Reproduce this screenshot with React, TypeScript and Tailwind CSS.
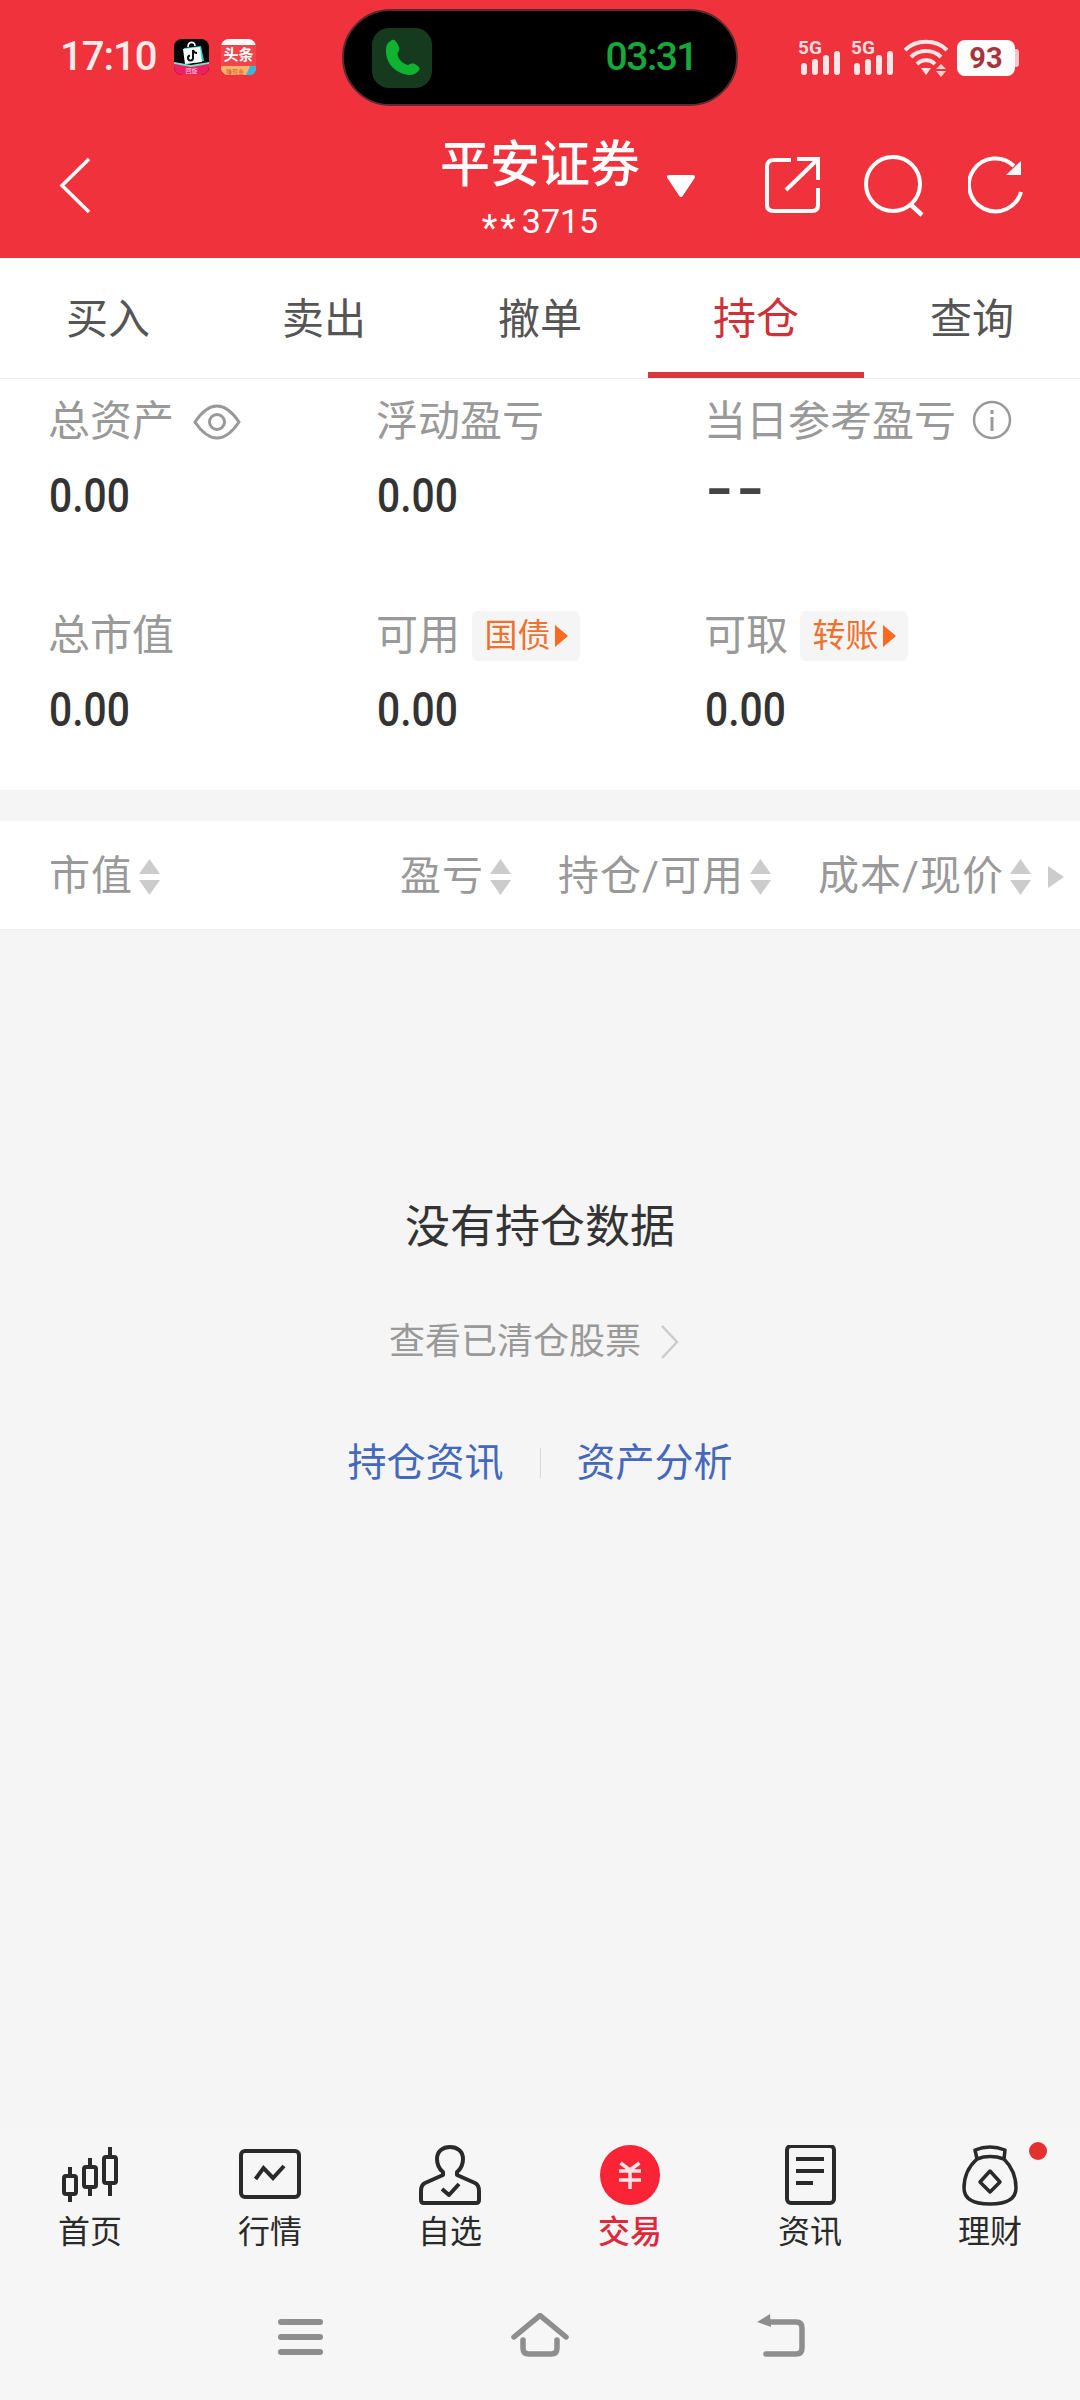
const summary = [
  { label: '总资产', value: '0.00', extra: 'eye' },
  { label: '浮动盈亏', value: '0.00' },
  { label: '当日参考盈亏', value: '--', extra: 'info' },
  { label: '总市值', value: '0.00' },
  { label: '可用', value: '0.00', badge: '国债' },
  { label: '可取', value: '0.00', badge: '转账' },
];

const StatusSignal = () => (
  <svg width="44" height="42" viewBox="0 -4 44 42" className="-mt-[4px] block">
    <text x="0" y="15" fontSize="19" fontWeight="700" fontFamily="Roboto, sans-serif" fill="#ffdcdc">5G</text>
    <g fill="#ffe6e6">
      <rect x="3" y="24" width="6" height="12" rx="3" />
      <rect x="14" y="20" width="6" height="16" rx="3" />
      <rect x="25" y="16" width="6" height="20" rx="3" />
      <rect x="36" y="12" width="6" height="24" rx="3" />
    </g>
  </svg>
);

const DouyinIcon = () => (
  <svg width="35" height="36" viewBox="0 0 35 36" className="block">
    <rect width="35" height="36" rx="8" fill="#050505" />
    <path d="M0 25 L17 27 L35 25 V28 A8 8 0 0 1 27 36 H8 A8 8 0 0 1 0 28 Z" fill="#ef1f63" />
    <path d="M0 23 L17 26 L35 23 V25 L17 28 L0 25 Z" fill="#7ee0c8" />
    <path d="M10 9 L27 7 L30 22 L13 25 Z" fill="#1fd5d8" />
    <path d="M9 10 L26 8 L28 23 L11 25 Z" fill="#ffffff" />
    <path d="M14 8 C14 2 21 2 21 7" fill="none" stroke="#ffffff" strokeWidth="1.6" />
    <path d="M19 11 V19 A2.5 2.5 0 1 1 16 16.5 M19 11 C19.500 13 21 14 23 14" fill="none" stroke="#111111" strokeWidth="2" />
    <text x="17.500" y="34" textAnchor="middle" fontSize="6" fill="#ffd6e2" fontFamily="Noto Sans CJK SC, sans-serif">回旋</text>
  </svg>
);

const ToutiaoIcon = () => (
  <svg width="35" height="36" viewBox="0 0 35 36" className="block">
    <rect width="35" height="36" rx="8" fill="#ffffff" />
    <path d="M0 6 H35 V28 H0 Z" fill="#f0454b" />
    <text x="17.500" y="21" textAnchor="middle" fontSize="15" fontWeight="700" fill="#ffffff" fontFamily="Noto Sans CJK SC, sans-serif">头条</text>
    <path d="M0 27 H35 V28 A8 8 0 0 1 27 36 H8 A8 8 0 0 1 0 28 Z" fill="#fbb56b" />
    <path d="M29 27 H35 V30 A6 6 0 0 1 29 36 H25 Z" fill="#38b6dc" />
    <text x="14" y="34.500" textAnchor="middle" fontSize="6" fill="#d9573a" fontFamily="Noto Sans CJK SC, sans-serif">赚现金</text>
  </svg>
);

const StatusBar = () => (
  <div className="flex h-[106px] items-start pl-[60px] pt-[9px]">
    <div className="mt-[30px] flex h-[36px] items-center">
      <span className="w-[97px] text-[40px] font-medium leading-[36px] tracking-[-1px] text-[#ffe9e9]">17:10</span>
      <div className="ml-[17px]"><DouyinIcon /></div>
      <div className="ml-[12px]"><ToutiaoIcon /></div>
    </div>
    <div className="ml-[86px] flex h-[97px] w-[396px] items-center justify-between rounded-full border-[2px] border-[#5c2a2c] bg-black pl-[28px] pr-[39px]">
      <div className="flex h-[60px] w-[60px] items-center justify-center rounded-[17px] bg-[#163a1e]">
        <svg width="40" height="42" viewBox="0 0 40 42">
          <path d="M10 3 C13 2 15 6 17 10 C18 13 16 15 15.500 17 C16 22 21 27 26 28 C28 27 30 26 33 27 C36 29 39 31 37 33 C34 38 28 39 22 37 C11 34 3 24 4 12 C4 8 6 5 10 3 Z" fill="#0fb32f" />
        </svg>
      </div>
      <span className="text-[39px] font-medium leading-none tracking-[-1.5px] text-[#16a83a]">03:31</span>
    </div>
    <div className="ml-[60px] mt-[31px] flex h-[36px] items-center">
      <StatusSignal />
      <div className="ml-[9px]"><StatusSignal /></div>
      <svg width="44" height="38" viewBox="0 0 44 38" className="ml-[9px] block">
        <g fill="none" stroke="#ffe6e6" strokeWidth="4">
          <path d="M1 11 C12 0 32 0 43 11" />
          <path d="M7 18 C15 10 29 10 37 18" />
          <path d="M13 25 C18 20 26 20 31 25" />
        </g>
        <path d="M17 29 H27 L22 36 Z" fill="#ffe6e6" />
        <path d="M37 25 L42 30 H32 Z M32 32 H42 L37 38 Z" fill="#ffd2d2" />
      </svg>
      <div className="ml-[9px] flex items-center">
        <div className="flex h-[36px] w-[58px] items-center justify-center rounded-[8px] bg-white text-[29px] font-bold leading-none text-[#a9333c]">93</div>
        <div className="h-[18px] w-[4px] rounded-r-[3px] bg-[#ffc4c8]" />
      </div>
    </div>
  </div>
);

const Header = () => (
  <div className="bg-[#f0323c] text-white">
    <StatusBar />
    <div className="grid h-[152px] grid-cols-[1fr_auto_1fr]">
      <div className="pl-[58px] pt-[51px]">
        <svg width="34" height="57" viewBox="0 0 34 57" className="block">
          <path d="M31 2 L4 28.500 L31 55" fill="none" stroke="#ffffff" strokeWidth="3.500" />
        </svg>
      </div>
      <div className="relative flex flex-col items-center pt-[29px]">
        <div className="text-[50px] font-medium leading-[60px]">平安证券</div>
        <div className="mt-[6px] flex h-[40px] items-center text-[34px] leading-[40px]">
          <span className="relative top-[7px] mr-[3px] text-[36px] tracking-[3px]">**</span>3715
        </div>
        <svg width="30" height="24" viewBox="0 0 30 24" className="absolute left-[100%] top-[68px] ml-[26px]">
          <path d="M3 3 H27 L15 21 Z" fill="#ffffff" stroke="#ffffff" strokeWidth="4" strokeLinejoin="round" />
        </svg>
      </div>
      <div className="flex items-start justify-end gap-[42px] pr-[54px] pt-[49px]">
        <svg width="58" height="60" viewBox="0 0 58 60" className="block">
          <path d="M27 5 H10 Q3 5 3 12 V50 Q3 56 10 56 H48 Q54 56 54 50 V33" fill="none" stroke="#ffffff" strokeWidth="4" />
          <path d="M22 35 L53 5 M33 4 H54 V25" fill="none" stroke="#ffffff" strokeWidth="4" />
        </svg>
        <svg width="62" height="62" viewBox="0 0 62 62" className="block">
          <circle cx="29" cy="29" r="27" fill="none" stroke="#ffffff" strokeWidth="4" />
          <path d="M46 49 L58 60" fill="none" stroke="#ffffff" strokeWidth="4.500" />
        </svg>
        <svg width="58" height="60" viewBox="0 0 58 60" className="block">
          <path d="M53 37 A26.500 26.500 0 1 1 46 11" fill="none" stroke="#ffffff" strokeWidth="4" />
          <path d="M53 6 V20 H38 Z" fill="#ffffff" />
        </svg>
      </div>
    </div>
  </div>
);

const Tabs = () => (
  <div className="flex h-[121px] border-b border-[#eeeeee] bg-white">
    {['买入', '卖出', '撤单', '持仓', '查询'].map((tab) => {
      const active = tab === '持仓';
      return (
        <div
          key={tab}
          className={
            active
              ? 'flex flex-1 items-center justify-center border-b-[6px] border-[#d9363e] pt-[9px] text-[43px] text-[#cf3139]'
              : 'flex flex-1 items-center justify-center pt-[3px] text-[42px] text-[#555555]'
          }
        >
          {tab}
        </div>
      );
    })}
  </div>
);

const EyeIcon = () => (
  <svg width="48" height="36" viewBox="0 0 48 36" className="ml-[19px] block">
    <path d="M2 18 C10 6 17 2 24 2 C31 2 38 6 46 18 C38 30 31 34 24 34 C17 34 10 30 2 18 Z" fill="none" stroke="#999999" strokeWidth="3" />
    <circle cx="24" cy="18" r="7.500" fill="none" stroke="#999999" strokeWidth="3" />
  </svg>
);

const InfoIcon = () => (
  <svg width="40" height="40" viewBox="0 0 40 40" className="ml-[16px] mt-[-5px] block">
    <circle cx="20" cy="20" r="18" fill="none" stroke="#999999" strokeWidth="2.500" />
    <rect x="18.500" y="10" width="3" height="4" fill="#999999" />
    <rect x="18.500" y="17" width="3" height="14" fill="#999999" />
  </svg>
);

const Summary = () => (
  <div className="grid grid-cols-[328px_328px_1fr] gap-y-[81px] bg-white pb-[51px] pl-[48px] pt-[13px]">
    {summary.map((item) => (
      <div key={item.label}>
        <div className="flex h-[60px] items-center text-[42px] leading-[60px] text-[#999999]">
          <span>{item.label}</span>
          {item.extra === 'eye' && <EyeIcon />}
          {item.extra === 'info' && <InfoIcon />}
          {item.badge && (
            <span className="ml-[12px] flex h-[50px] w-[108px] items-center justify-center gap-[4px] rounded-[6px] bg-[#f5f5f5] text-[33px] text-[#f0702e]">
              {item.badge}
              <svg width="13" height="22" viewBox="0 0 13 22" className="block">
                <path d="M0 0 L13 11 L0 22 Z" fill="#fb6a1e" />
              </svg>
            </span>
          )}
        </div>
        {item.value === '--' ? (
          <div className="-ml-[6px] mt-[13px] h-[60px] origin-left scale-x-[1.45] font-['Liberation_Mono',monospace] text-[49px] font-bold leading-[52px] tracking-[-8px] text-[#444444]">--</div>
        ) : (
          <div className="ml-[1px] mt-[14px] h-[59px] origin-left scale-x-[0.85] text-[48px] font-medium leading-[60px] text-[#333333]">{item.value}</div>
        )}
      </div>
    ))}
  </div>
);

const SortArrows = () => (
  <svg width="21" height="36" viewBox="0 0 21 36" className="ml-[6px] block">
    <path d="M10.500 0 L21 15 H0 Z M0 21 H21 L10.500 36 Z" fill="#cccccc" />
  </svg>
);

const TableHeader = () => (
  <div className="mt-[31px] h-[109px] border-b border-[#eeeeee] bg-white">
    <div className="grid h-[108px] grid-cols-[400px_158px_260px_1fr] items-center pt-[3px] text-[41px] tracking-[1px] text-[#999999]">
      <div className="flex items-center pl-[49px]">市值<SortArrows /></div>
      <div className="flex items-center">盈亏<SortArrows /></div>
      <div className="flex items-center">持仓/可用<SortArrows /></div>
      <div className="flex items-center">
        成本/现价<SortArrows />
        <svg width="16" height="22" viewBox="0 0 16 22" className="ml-[17px] block">
          <path d="M0 0 L16 11 L0 22 Z" fill="#cccccc" />
        </svg>
      </div>
    </div>
  </div>
);

const EmptyState = () => (
  <div className="flex flex-1 flex-col items-center bg-[#f5f5f5] pt-[268px]">
    <div className="text-[45px] leading-[60px] text-[#333333]">没有持仓数据</div>
    <div className="mt-[59px] flex h-[50px] items-center pr-[12px] text-[36px] text-[#999999]">
      查看已清仓股票
      <svg width="18" height="34" viewBox="0 0 18 34" className="ml-[20px] block">
        <path d="M1 1 L16 17 L1 33" fill="none" stroke="#cccccc" strokeWidth="2.500" />
      </svg>
    </div>
    <div className="mt-[71px] flex h-[50px] items-center text-[39px] text-[#4468bd]">
      <span>持仓资讯</span>
      <span className="mx-[36px] h-[30px] w-[1px] bg-[#d8d8d8]" />
      <span>资产分析</span>
    </div>
  </div>
);

const CandleIcon = () => (
  <svg width="64" height="60" viewBox="58 2146 64 60" className="block">
    <g fill="none" stroke="#2a2a2a" strokeWidth="4">
      <path d="M70 2168 V2177 M70 2195 V2203 M90 2159 V2168 M90 2188 V2197 M110 2148 V2158 M110 2184 V2197" />
      <rect x="64" y="2177" width="12" height="18" rx="2" />
      <rect x="84" y="2168" width="12" height="20" rx="2" />
      <rect x="104" y="2158" width="12" height="26" rx="2" />
    </g>
  </svg>
);

const MarketIcon = () => (
  <svg width="64" height="60" viewBox="238 2146 64 60" className="block">
    <g fill="none" stroke="#2a2a2a" strokeWidth="4">
      <rect x="241" y="2152" width="58" height="46" rx="4" />
      <path d="M255.500 2180 L263.500 2169 L273 2179 L284 2167" />
    </g>
  </svg>
);

const PersonIcon = () => (
  <svg width="64" height="60" viewBox="418 2146 64 60" className="block">
    <g fill="none" stroke="#2a2a2a" strokeWidth="4" strokeLinejoin="round">
      <path d="M443 2173 C438 2169 437 2164 437 2160 C437 2152 443 2148 450 2148 C457 2148 463 2152 463 2160 C463 2164 462 2169 457 2173 L457 2176 L475 2184 Q479 2186 479 2192 L479 2201 Q479 2204 476 2204 L424 2204 Q421 2204 421 2201 L421 2192 Q421 2186 425 2184 L443 2176 Z" />
      <path d="M442 2190 L449 2196 L459 2185" />
    </g>
  </svg>
);

const TradeIcon = () => (
  <svg width="64" height="60" viewBox="598 2146 64 60" className="block">
    <circle cx="630" cy="2175" r="30" fill="#fb2336" transform="translate(0 1)" />
    <path d="M620.500 2164 L630 2171 L639.500 2164 M619 2172 H641 M619 2181 H641 M630 2171 V2190" fill="none" stroke="#ffe4e6" strokeWidth="3.500" />
  </svg>
);

const NewsIcon = () => (
  <svg width="64" height="60" viewBox="778 2146 64 60" className="block">
    <g fill="none" stroke="#2a2a2a" strokeWidth="4">
      <rect x="787" y="2147" width="47" height="57" rx="4" />
      <path d="M796 2160 H824 M796 2172 H824 M796 2184 H813" />
    </g>
  </svg>
);

const BagIcon = () => (
  <svg width="64" height="62" viewBox="958 2146 64 62" className="block">
    <g fill="none" stroke="#2a2a2a" strokeWidth="3.500" strokeLinejoin="round">
      <path d="M975 2151 C985 2147 995 2147 1005 2151 L1004 2160 C995 2157 985 2157 977 2160 Z" />
      <path d="M977 2160 C968 2168 964 2178 964 2189 C964 2200 973 2205 990 2205 C1007 2205 1016 2200 1016 2189 C1016 2178 1012 2168 1004 2160" />
      <path d="M990 2172 L1000 2183 L990 2193 L980 2183 Z" />
    </g>
  </svg>
);

const navItems = [
  { label: '首页', icon: <CandleIcon /> },
  { label: '行情', icon: <MarketIcon /> },
  { label: '自选', icon: <PersonIcon /> },
  { label: '交易', icon: <TradeIcon />, active: true },
  { label: '资讯', icon: <NewsIcon /> },
  { label: '理财', icon: <BagIcon />, dot: true },
];

const BottomNav = () => (
  <div className="bg-[#f6f6f6]">
    <div className="grid grid-cols-6 pt-[15px]">
      {navItems.map((item) => (
        <div key={item.label} className="relative flex flex-col items-center">
          <div className="h-[60px]">{item.icon}</div>
          <div className={item.active ? 'mt-[7px] text-[32px] font-medium leading-[40px] text-[#e0283c]' : 'mt-[7px] text-[32px] leading-[40px] text-[#2a2a2a]'}>
            {item.label}
          </div>
          {item.dot && <span className="absolute right-[33px] top-[-3px] h-[18px] w-[18px] rounded-full bg-[#e53030]" />}
        </div>
      ))}
    </div>
    <div className="mx-auto grid h-[148px] w-[720px] grid-cols-3 justify-items-center pt-[61px]">
      <div className="mt-[6px] flex h-[36px] w-[45px] flex-col justify-between">
        <span className="h-[6px] rounded-full bg-[#8e8e8e]" />
        <span className="h-[6px] rounded-full bg-[#8e8e8e]" />
        <span className="h-[6px] rounded-full bg-[#8e8e8e]" />
      </div>
      <svg width="58" height="44" viewBox="0 0 58 44" className="block">
        <path d="M3 24 L29 2.500 L55 24 M12 27 V35 Q12 41 18 41 H40 Q46 41 46 35 V27" fill="none" stroke="#8e8e8e" strokeWidth="5.500" strokeLinecap="round" />
      </svg>
      <svg width="50" height="44" viewBox="0 0 50 44" className="block">
        <path d="M13 9 H41 Q47 9 47 15 V35 Q47 41 41 41 H11" fill="none" stroke="#8e8e8e" strokeWidth="5.500" strokeLinecap="round" />
        <path d="M2 9 L15 1 L16 14 Z" fill="#8e8e8e" />
      </svg>
    </div>
  </div>
);

export default function App() {
  return (
    <div className="flex h-[2400px] w-[1080px] flex-col overflow-hidden bg-[#f5f5f5] font-['Roboto','Noto_Sans_CJK_SC',sans-serif]">
      <Header />
      <Tabs />
      <Summary />
      <TableHeader />
      <EmptyState />
      <BottomNav />
    </div>
  );
}
